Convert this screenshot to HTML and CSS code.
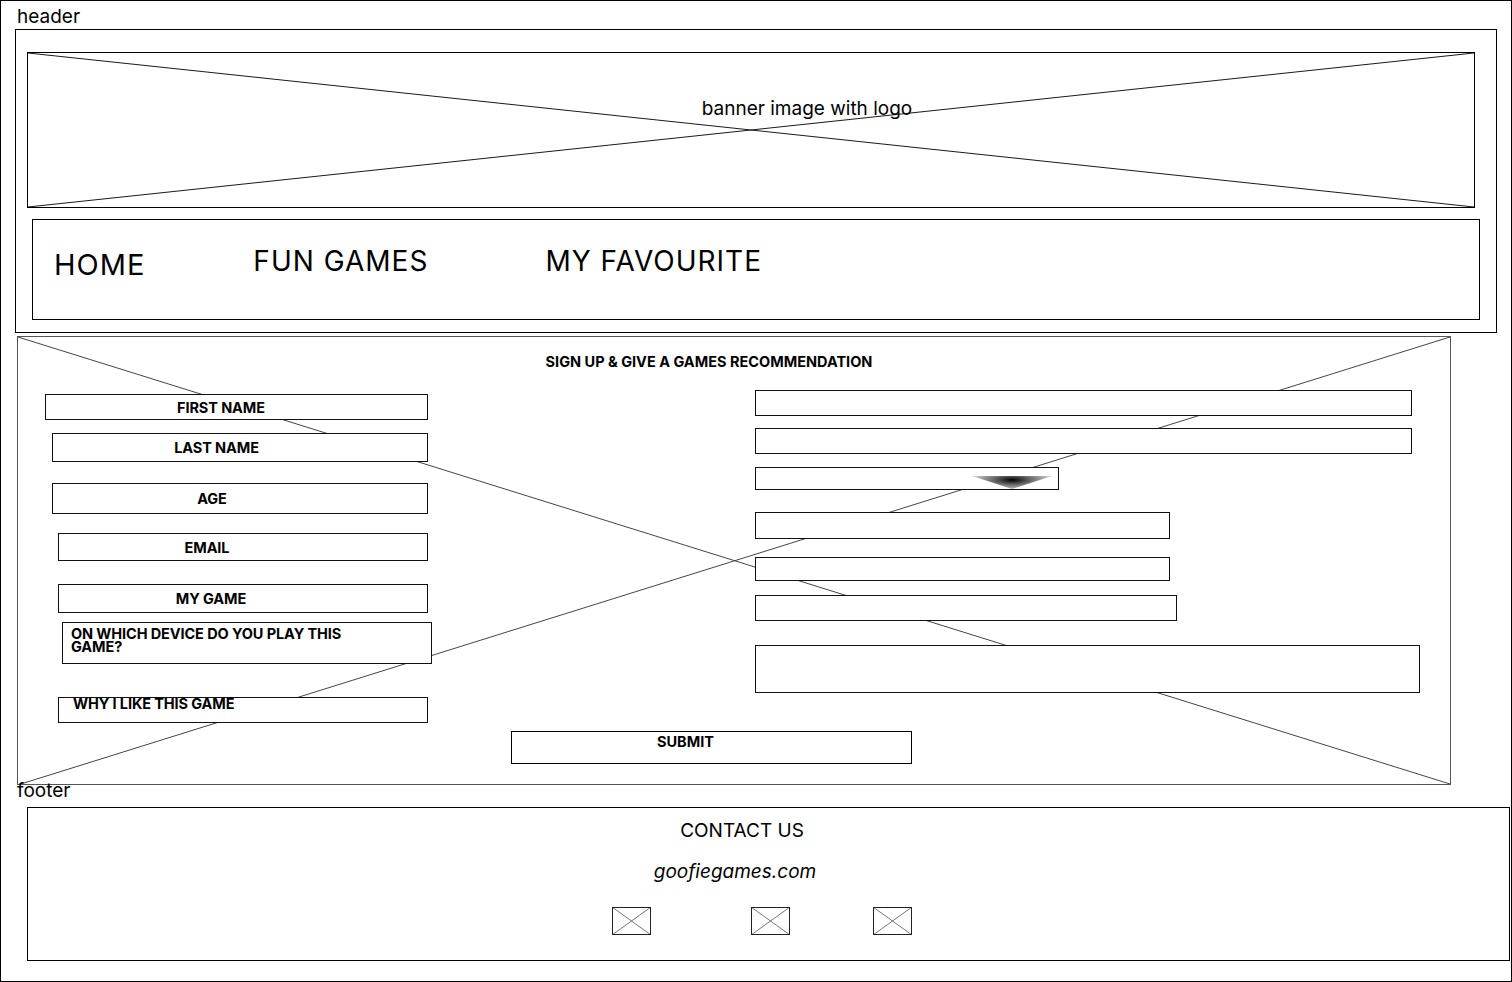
FILE: index.html
```html
<!DOCTYPE html>
<html lang="en">
<head>
    <meta charset="UTF-8">
    <meta name="viewport" content="width=device-width, initial-scale=1.0">
    <title>Goofie Games - Sign Up</title>
    <link rel="stylesheet" href="styles.css">
</head>
<body>
    <div class="board">
        <!-- Header: banner + navigation -->
        <div class="tag tag-header">header</div>
        <header class="header-box">
            <div class="banner">
                <svg class="cross" viewBox="0 0 100 100" preserveAspectRatio="none">
                    <line x1="0" y1="0" x2="100" y2="100" vector-effect="non-scaling-stroke"/>
                    <line x1="0" y1="100" x2="100" y2="0" vector-effect="non-scaling-stroke"/>
                </svg>
                <p class="banner-text">banner image with logo</p>
            </div>
            <nav class="nav">
                <a class="nav-link nav-home" href="#">HOME</a>
                <a class="nav-link nav-games" href="#">FUN GAMES</a>
                <a class="nav-link nav-fav" href="#">MY FAVOURITE</a>
            </nav>
        </header>

        <!-- Sign up form -->
        <main class="signup">
            <svg class="cross cross-grey" viewBox="0 0 100 100" preserveAspectRatio="none">
                <line x1="0" y1="0" x2="100" y2="100" vector-effect="non-scaling-stroke"/>
                <line x1="0.2" y1="100" x2="100" y2="0" vector-effect="non-scaling-stroke"/>
            </svg>
            <h2 class="signup-title">SIGN UP &amp; GIVE A GAMES RECOMMENDATION</h2>
            <div class="form-cols">
                <div class="col-left">
                    <div class="field lf-first">FIRST NAME</div>
                    <div class="field lf-last">LAST NAME</div>
                    <div class="field lf-age">AGE</div>
                    <div class="field lf-email">EMAIL</div>
                    <div class="field lf-game">MY GAME</div>
                    <div class="field lf-device">ON WHICH DEVICE DO YOU PLAY THIS GAME?</div>
                    <div class="field lf-why">WHY I LIKE THIS GAME</div>
                </div>
                <div class="col-right">
                    <div class="input ri-first"></div>
                    <div class="input ri-last"></div>
                    <div class="input ri-age">
                        <span class="drop-arrow"></span>
                    </div>
                    <div class="input ri-email"></div>
                    <div class="input ri-game"></div>
                    <div class="input ri-device"></div>
                    <div class="input ri-why"></div>
                </div>
            </div>
            <button class="submit">SUBMIT</button>
        </main>

        <!-- Footer -->
        <div class="tag tag-footer">footer</div>
        <footer class="footer-box">
            <p class="contact">CONTACT US</p>
            <p class="site">goofiegames.com</p>
            <div class="socials">
                <svg class="ico" viewBox="0 0 39 28">
                    <line x1="0" y1="0" x2="39" y2="28"/>
                    <line x1="0" y1="28" x2="39" y2="0"/>
                    <rect x="0.5" y="0.5" width="38" height="27"/>
                </svg>
                <svg class="ico ico-2" viewBox="0 0 39 28">
                    <line x1="0" y1="0" x2="39" y2="28"/>
                    <line x1="0" y1="28" x2="39" y2="0"/>
                    <rect x="0.5" y="0.5" width="38" height="27"/>
                </svg>
                <svg class="ico ico-3" viewBox="0 0 39 28">
                    <line x1="0" y1="0" x2="39" y2="28"/>
                    <line x1="0" y1="28" x2="39" y2="0"/>
                    <rect x="0.5" y="0.5" width="38" height="27"/>
                </svg>
            </div>
        </footer>
    </div>
</body>
</html>
```

FILE: styles.css
```css
* {
    margin: 0;
    padding: 0;
    box-sizing: border-box;
}

body {
    font-family: Inter, "Liberation Sans", sans-serif;
    color: #000;
    background: #fff;
}

.board {
    width: 1512px;
    height: 982px;
    border: 1px solid #000;
    overflow: hidden;
}

/* little section names written on the canvas */
.tag {
    font-size: 19px;
    line-height: 23px;
    margin-left: 16px;
}

.tag-header {
    padding-top: 4px;
}

.tag-footer {
    position: relative;
    margin-top: -6px;
}

/* placeholder cross for images */
.cross {
    position: absolute;
    top: 0;
    left: 0;
    width: 100%;
    height: 100%;
}

.cross line {
    stroke: #1a1a1a;
    stroke-width: 1;
}

.cross-grey line {
    stroke: #444;
}

/* ---------- header ---------- */
.header-box {
    margin: 1px 0 0 14px;
    width: 1482px;
    height: 304px;
    border: 1px solid #000;
}

.banner {
    position: relative;
    margin: 22px 0 0 11px;
    width: 1448px;
    height: 156px;
    border: 1px solid #000;
}

.banner-text {
    position: relative;
    padding: 44px 0 0 112px;
    font-size: 19px;
    line-height: 23px;
    text-align: center;
}

.nav {
    display: flex;
    align-items: flex-start;
    margin: 11px 0 0 16px;
    width: 1448px;
    height: 101px;
    padding: 25px 0 0 21px;
    border: 1px solid #000;
}

.nav-link {
    color: #000;
    text-decoration: none;
    font-size: 28px;
    line-height: 32px;
    letter-spacing: 1px;
}

.nav-home {
    font-size: 29px;
    margin-top: 4px;
}

.nav-games {
    margin-left: 108px;
}

.nav-fav {
    margin-left: 117px;
}

/* ---------- sign up ---------- */
.signup {
    position: relative;
    margin: 3px 0 0 16px;
    width: 1434px;
    height: 449px;
    border: 1px solid #555;
}

.signup-title {
    position: relative;
    padding: 16px 50px 0 0;
    font-size: 14.5px;
    line-height: 17px;
    font-weight: 700;
    text-align: center;
}

.form-cols {
    position: relative;
    display: flex;
    align-items: flex-start;
    margin-top: 20px;
}

.col-left {
    width: 386px;
    margin-left: 27px;
    padding-top: 4px;
}

.col-right {
    margin-left: 324px;
}

.field,
.input {
    background: #fff;
    border: 1px solid #111;
}

.field {
    display: flex;
    align-items: center;
    justify-content: center;
    font-size: 14.5px;
    line-height: 17px;
    font-weight: 700;
    letter-spacing: -0.1px;
}

.lf-first  { width: 383px; height: 26px; padding-right: 31px; }
.lf-last   { width: 376px; height: 29px; margin: 13px 0 0 7px; padding-right: 47px; }
.lf-age    { width: 376px; height: 31px; margin: 21px 0 0 7px; padding-right: 56px; }
.lf-email  { width: 370px; height: 28px; margin: 19px 0 0 13px; padding-right: 72px; }
.lf-game   { width: 370px; height: 29px; margin: 23px 0 0 13px; padding-right: 64px; }

.lf-device {
    display: block;
    width: 370px;
    height: 42px;
    margin: 9px 0 0 17px;
    padding: 4px 70px 0 8px;
    line-height: 13px;
    text-align: left;
}

.lf-why {
    display: block;
    width: 370px;
    height: 26px;
    margin: 33px 0 0 13px;
    padding: 0 0 0 14px;
    line-height: 12px;
    text-align: left;
}

.ri-first  { width: 657px; height: 26px; }
.ri-last   { width: 657px; height: 26px; margin-top: 12px; }
.ri-email  { width: 415px; height: 27px; margin-top: 22px; }
.ri-game   { width: 415px; height: 24px; margin-top: 18px; }
.ri-device { width: 422px; height: 26px; margin-top: 14px; }
.ri-why    { width: 665px; height: 48px; margin-top: 24px; }

.ri-age {
    display: flex;
    justify-content: flex-end;
    align-items: flex-end;
    width: 304px;
    height: 23px;
    margin-top: 13px;
    padding-right: 6px;
}

.drop-arrow {
    display: block;
    width: 80px;
    height: 13px;
    clip-path: polygon(0 0, 100% 0, 50% 100%);
    background: radial-gradient(ellipse 65% 100% at 50% 30%, #000 0%, #666 35%, #bbb 70%, #eee 100%);
}

.submit {
    position: relative;
    display: flex;
    align-items: flex-start;
    width: 401px;
    height: 33px;
    margin: 8px 0 0 493px;
    padding: 2px 0 0 145px;
    border: 1px solid #000;
    background: #fff;
    font-family: inherit;
    font-size: 14.5px;
    line-height: 16px;
    font-weight: 700;
    text-align: left;
}

/* ---------- footer ---------- */
.footer-box {
    margin: 5px 0 0 26px;
    width: 1483px;
    height: 154px;
    border: 1px solid #000;
}

.contact {
    padding: 11px 53px 0 0;
    font-size: 19px;
    line-height: 23px;
    text-align: center;
}

.site {
    margin-top: 18px;
    padding-right: 67px;
    font-size: 19px;
    line-height: 23px;
    font-style: italic;
    text-align: center;
}

.socials {
    display: flex;
    margin-top: 24px;
    padding-left: 584px;
}

.ico {
    width: 39px;
    height: 28px;
    fill: none;
}

.ico rect {
    stroke: #222;
}

.ico line {
    stroke: #555;
    stroke-width: 0.8;
}

.ico-2 { margin-left: 100px; }
.ico-3 { margin-left: 83px; }
```
